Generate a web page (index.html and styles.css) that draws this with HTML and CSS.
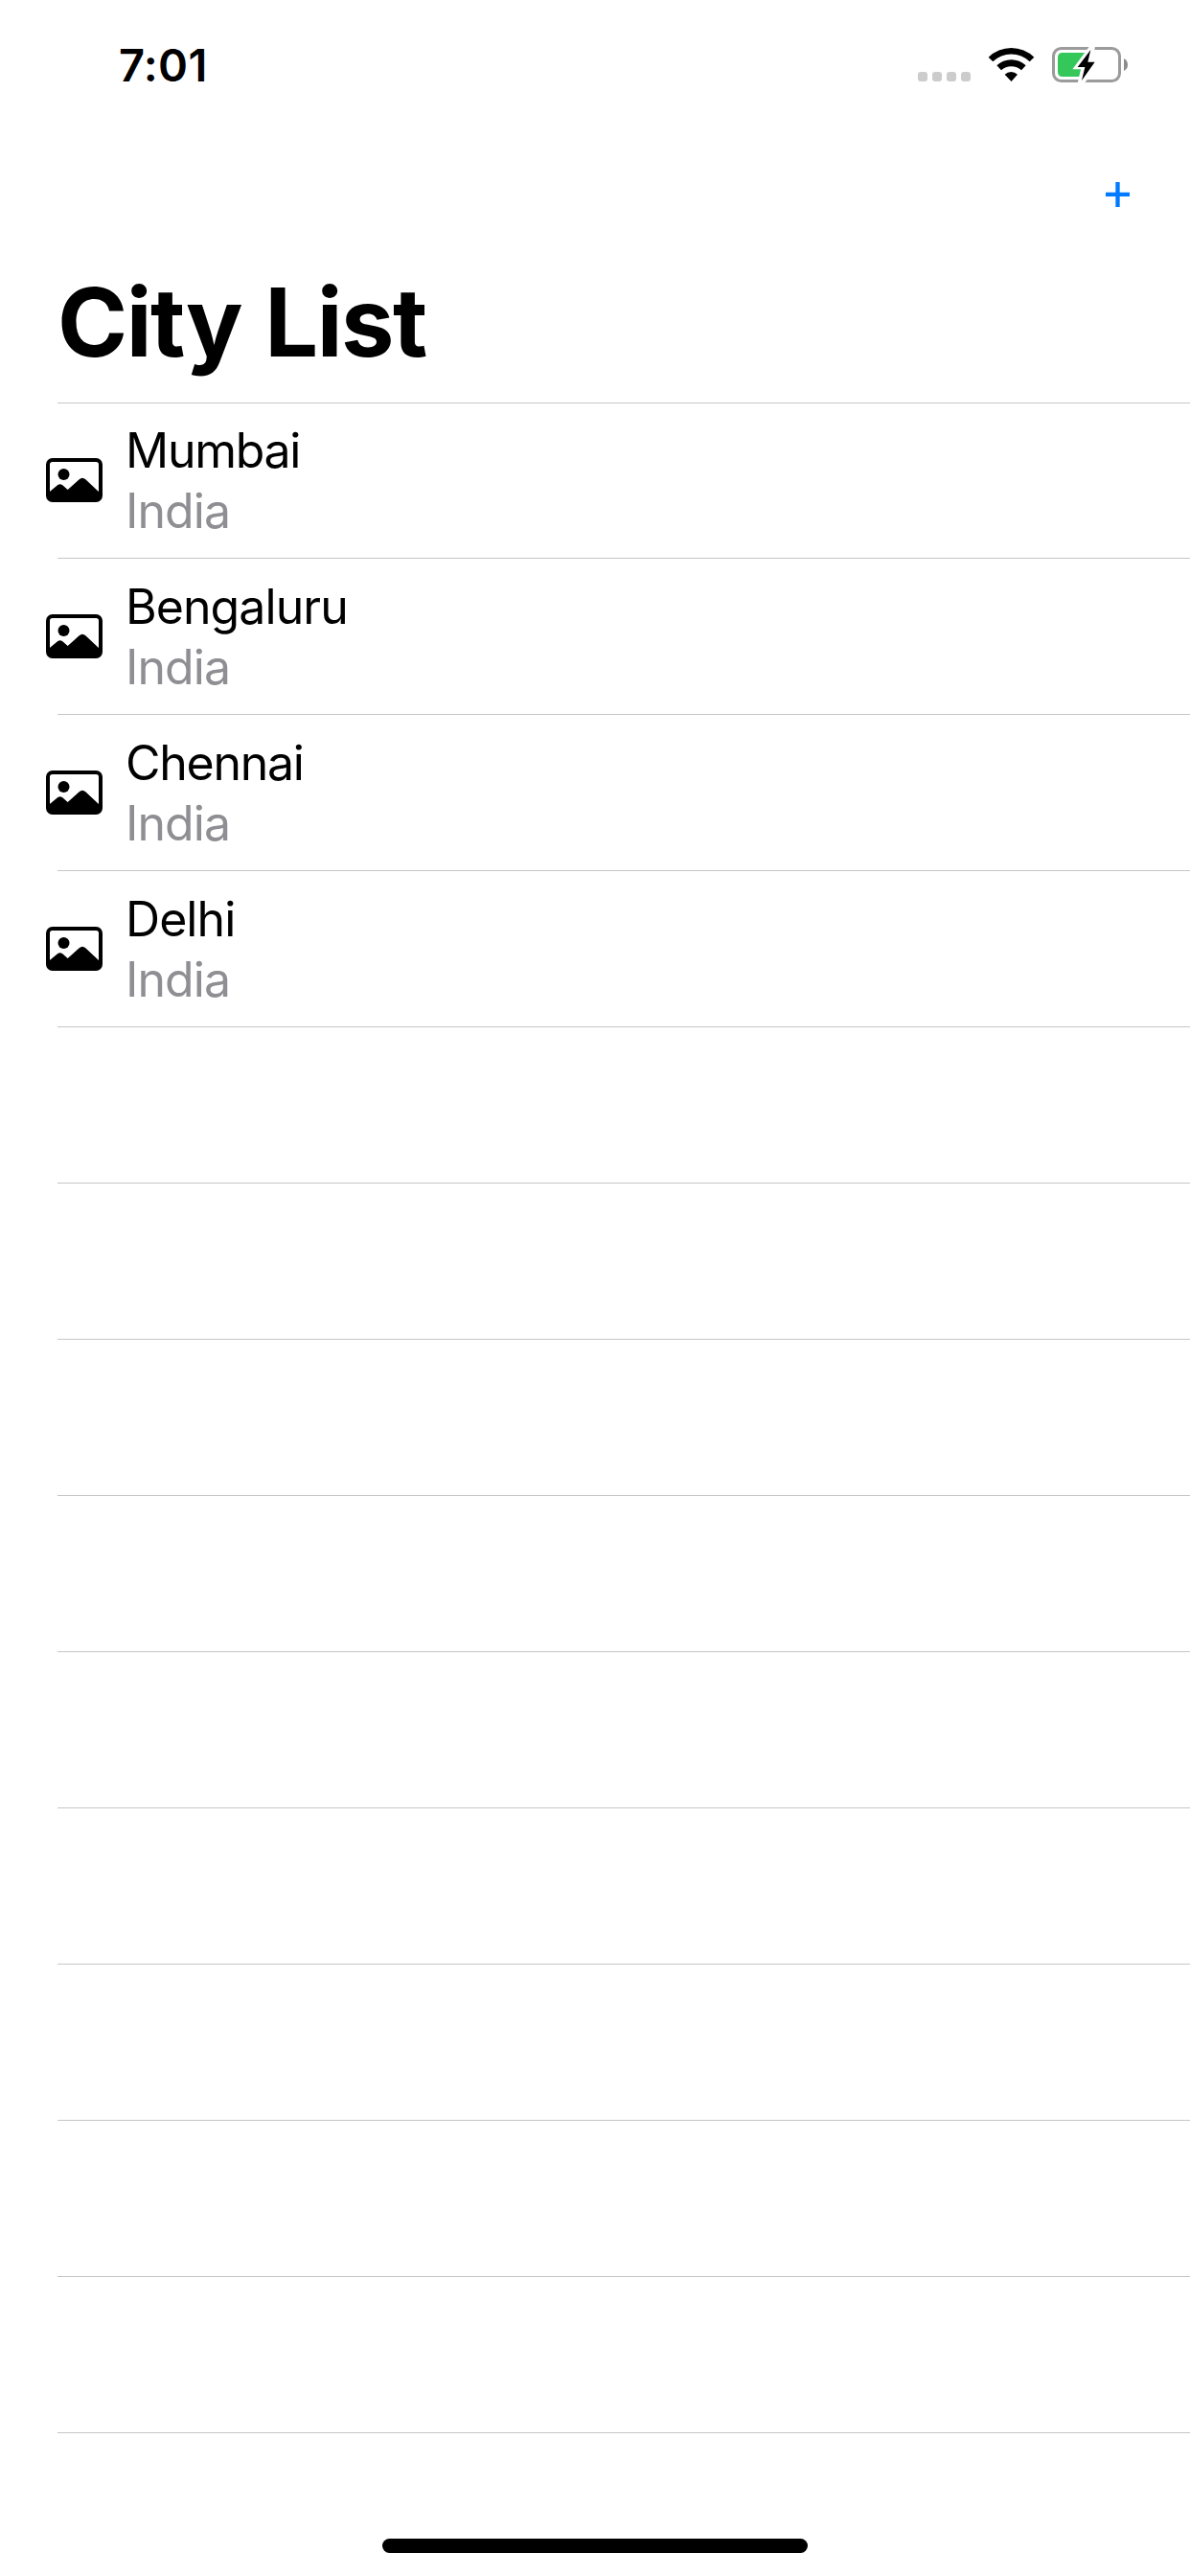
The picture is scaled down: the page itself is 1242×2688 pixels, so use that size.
FILE: index.html
```html
<!DOCTYPE html>
<html lang="en">
<head>
<meta charset="utf-8">
<title>City List</title>
<link rel="stylesheet" href="styles.css">
</head>
<body>
<svg class="defs" aria-hidden="true">
  <symbol id="photo" viewBox="54 204 177 138">
    <rect x="60" y="210" width="165" height="126" rx="14" fill="none" stroke="#000" stroke-width="12"/>
    <circle cx="109.500" cy="255" r="18"/>
    <path d="M62 312 L91 288 Q98 283 105 288 L122 303 L158 271 Q168 262 178 271 L222 312 V334 H62 Z"/>
  </symbol>
</svg>
<div class="screen">
  <header class="status">
    <time class="clock">7:01</time>
    <div class="indicators">
      <div class="signal"><i></i><i></i><i></i><i></i></div>
      <svg class="wifi" viewBox="270 54 153 114">
        <path d="M275 89 A102 102 0 0 1 418 89 L404 103 A82 82 0 0 0 289 103 Z"/>
        <path d="M301 115 A65 65 0 0 1 392 115 L378 130 A46 46 0 0 0 315 130 Z"/>
        <path d="M326 143 A30 30 0 0 1 366 143 L346.500 165 Z"/>
      </svg>
      <svg class="battery" viewBox="474 51 240 120">
        <rect x="478.500" y="61.500" width="207" height="102" rx="24" fill="none" stroke="#9b9b9b" stroke-width="9"/>
        <path d="M699 93 Q711 99 711 112.500 Q711 126 699 132 Z" fill="#8c8c8c"/>
        <path d="M507 75 H580 V150 H507 Q492 150 492 135 V90 Q492 75 507 75 Z" fill="#34c759"/>
        <path d="M592 54 L538 127 H564 L554 171 H575 L632 97 H602 L609 54 Z" fill="#fff"/>
        <path d="M595 66 L554 120 H577 L567 162 L608 104 H586 Z"/>
      </svg>
    </div>
  </header>
  <nav class="toolbar">
    <button class="add" aria-label="Add city">
      <svg class="plus" viewBox="72 60 75 78"><path d="M109.500 60 V138 M72 98.500 H147" stroke="#007aff" stroke-width="13"/></svg>
    </button>
  </nav>
  <h1 class="title">City List</h1>
  <ul class="list">
    <li class="row"><svg class="photo"><use href="#photo"/></svg><div class="text"><span class="name tight">Mumbai</span><span class="country">India</span></div></li>
    <li class="row"><svg class="photo"><use href="#photo"/></svg><div class="text"><span class="name">Bengaluru</span><span class="country">India</span></div></li>
    <li class="row"><svg class="photo"><use href="#photo"/></svg><div class="text"><span class="name tight">Chennai</span><span class="country">India</span></div></li>
    <li class="row"><svg class="photo"><use href="#photo"/></svg><div class="text"><span class="name">Delhi</span><span class="country">India</span></div></li>
    <li class="row"></li>
    <li class="row"></li>
    <li class="row"></li>
    <li class="row"></li>
    <li class="row"></li>
    <li class="row"></li>
    <li class="row"></li>
    <li class="row"></li>
    <li class="row"></li>
  </ul>
  <footer class="home"><div class="home-bar"></div></footer>
</div>
</body>
</html>
```
FILE: styles.css
```css
* { box-sizing: border-box; }

body {
  margin: 0;
  background: #fff;
  color: #000;
  font-family: Inter, "Liberation Sans", sans-serif;
}

.defs { display: none; }

.screen {
  display: flex;
  flex-direction: column;
  width: 1242px;
  height: 2688px;
  overflow: hidden;
}

.status {
  display: flex;
  justify-content: space-between;
  height: 132px;
  padding: 40px 64px 0 124px;
}

.clock {
  font-size: 47px;
  font-weight: 600;
  line-height: 56px;
  letter-spacing: 0.3px;
}

.indicators {
  display: flex;
  align-items: flex-start;
  padding-top: 7px;
}

.signal {
  display: flex;
  gap: 5px;
  margin: 28px 17px 0 0;
}

.signal i {
  width: 10px;
  height: 10px;
  border-radius: 3px;
  background: #ccc;
}

.wifi {
  width: 51px;
  height: 38px;
  margin: 1px 17px 0 0;
}

.battery {
  width: 80px;
  height: 40px;
}

.toolbar {
  display: flex;
  justify-content: flex-end;
  height: 144px;
  padding: 58px 63px 0 0;
}

.add {
  display: block;
  width: 25px;
  height: 26px;
  padding: 0;
  border: 0;
  background: none;
}

.plus {
  display: block;
  width: 25px;
  height: 26px;
}

.title {
  height: 144px;
  margin: 0;
  padding-left: 60px;
  font-size: 99px;
  font-weight: 700;
  line-height: 120px;
  letter-spacing: -1.5px;
  word-spacing: 2.2px;
}

.list {
  margin: 0 0 0 60px;
  padding: 0;
  list-style: none;
  border-top: 1px solid #c6c6c8;
}

.row {
  display: flex;
  align-items: center;
  gap: 24px;
  height: 163px;
  margin-left: -12px;
  padding-top: 18px;
  padding-bottom: 18px;
  background: linear-gradient(#c6c6c8, #c6c6c8) 12px 100% / 100% 1px no-repeat;
}

.row:first-child {
  height: 162px;
  padding-top: 17px;
}

.photo {
  width: 59px;
  height: 46px;
  margin-bottom: 2px;
}

.text {
  display: flex;
  flex-direction: column;
  font-size: 50px;
  line-height: 63px;
  letter-spacing: -0.93px;
}

.tight { letter-spacing: -1.28px; }

.country { color: #8e8e93; }

.home {
  display: flex;
  justify-content: center;
  margin-top: auto;
  padding-bottom: 24px;
}

.home-bar {
  width: 444px;
  height: 15px;
  border-radius: 8px;
  background: #000;
}
```
